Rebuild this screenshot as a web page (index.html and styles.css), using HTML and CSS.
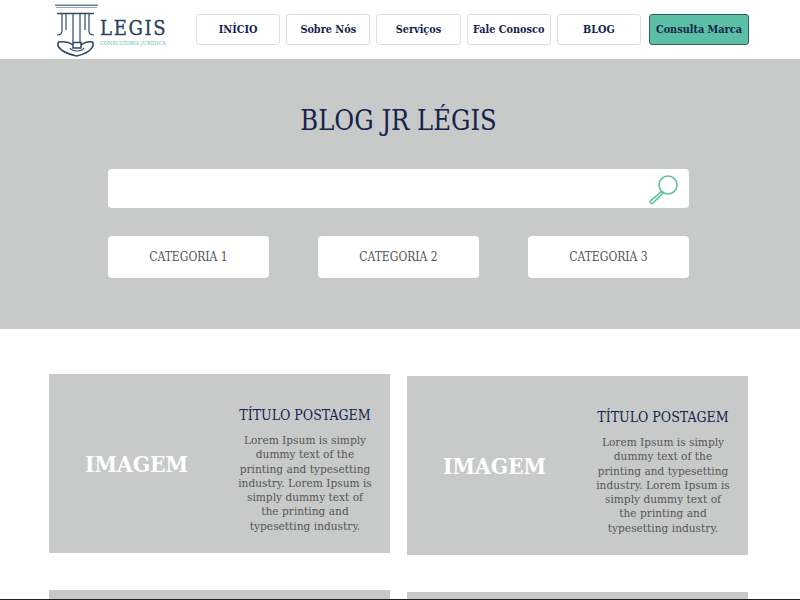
FILE: index.html
```html
<!DOCTYPE html>
<html lang="pt-BR">
<head>
    <meta charset="UTF-8">
    <meta name="viewport" content="width=device-width, initial-scale=1.0">
    <title>Blog JR Légis</title>
    <link rel="stylesheet" href="styles.css">
</head>
<body>
<div class="page">
    <header class="topo">
        <a class="logo" href="#">
            <svg class="logo-icone" width="46" height="58" viewBox="0 0 46 58" fill="none" stroke="#2f4a68" stroke-width="1.2">
                <path d="M1 5.2H44" stroke="#6d8090" stroke-width="1.4"/>
                <path d="M2 7.4H43" stroke="#6d8090" stroke-width=".8"/>
                <path d="M3 13.5H40" stroke-width="1.4"/>
                <path d="M8 14V31Q8 35 3 35"/>
                <path d="M12 14V30"/>
                <path d="M19 14V42M26 14V42"/>
                <path d="M31 14V30"/>
                <path d="M35 14V31Q35 35 40 35"/>
                <path d="M19 42.5H27V48H19Z" stroke-width="1.5"/>
                <path d="M4 42Q14 41 19 45M39 42Q32 41 27 45" stroke-width="1.5"/>
                <path d="M4 42V46Q8 53 22.5 56Q36 53 39 46V42" stroke-width="1.6"/>
                <path d="M16 48Q18 51 23 51Q28 51 30 48"/>
            </svg>
            <span class="logo-texto">
                <span class="logo-nome">LEGIS</span>
                <span class="logo-sub">CONSULTORIA JURÍDICA</span>
            </span>
        </a>
        <nav class="menu">
            <a class="menu-item" href="#">INÍCIO</a>
            <a class="menu-item" href="#">Sobre Nós</a>
            <a class="menu-item" href="#">Serviços</a>
            <a class="menu-item" href="#">Fale Conosco</a>
            <a class="menu-item" href="#">BLOG</a>
            <a class="menu-item destaque" href="#">Consulta Marca</a>
        </nav>
    </header>

    <section class="hero">
        <h1>BLOG JR LÉGIS</h1>
        <div class="busca">
            <svg width="32" height="32" viewBox="0 0 32 32" fill="none" stroke="#5cc0a7" stroke-width="1.6">
                <circle cx="20" cy="12" r="9"/>
                <path d="M13.5 18.5L15 20L4.8 30.2Q3.8 31 2.6 30Q1.7 28.9 2.6 27.8Z"/>
            </svg>
        </div>
        <div class="categorias">
            <a class="categoria" href="#">CATEGORIA 1</a>
            <a class="categoria" href="#">CATEGORIA 2</a>
            <a class="categoria" href="#">CATEGORIA 3</a>
        </div>
    </section>

    <main class="posts">
        <article class="post">
            <div class="post-imagem">IMAGEM</div>
            <div class="post-texto">
                <h2>TÍTULO POSTAGEM</h2>
                <p>Lorem Ipsum is simply dummy text of the printing and typesetting industry. Lorem Ipsum is simply dummy text of<br>the printing and<br>typesetting industry.</p>
            </div>
        </article>
        <article class="post desce">
            <div class="post-imagem">IMAGEM</div>
            <div class="post-texto">
                <h2>TÍTULO POSTAGEM</h2>
                <p>Lorem Ipsum is simply dummy text of the printing and typesetting industry. Lorem Ipsum is simply dummy text of<br>the printing and<br>typesetting industry.</p>
            </div>
        </article>
        <article class="post"></article>
        <article class="post desce"></article>
    </main>
</div>
</body>
</html>
```

FILE: styles.css
```css
* { box-sizing: border-box; }
body { margin: 0; font-family: "DejaVu Serif", "Liberation Serif", serif; font-stretch: condensed; color: #14244c; background: #fff; }
a { text-decoration: none; color: inherit; }
h1, h2, p { margin: 0; font-weight: normal; }

.page { height: 600px; overflow: hidden; border-bottom: 1px solid #2b1a24; }

.topo { height: 59px; display: flex; align-items: flex-start; padding: 0 51px 0 54px; }
.logo { display: flex; width: 142px; align-items: flex-start; }
.logo-icone { flex: none; }
.logo-texto { display: flex; flex-direction: column; margin-top: 16px; }
.logo-nome { font-size: 20px; line-height: 24px; letter-spacing: 1.7px; color: #2a4160; -webkit-text-stroke: .3px #2a4160; }
.logo-sub { font-size: 5.5px; line-height: 6px; color: #5cc0a7; white-space: nowrap; }

.menu { display: flex; gap: 6px; margin-top: 14px; }
.menu-item { width: 84.2px; height: 31px; display: flex; align-items: center; justify-content: center; border: 1px solid #dcdde0; border-radius: 3px; font-size: 10.8px; font-weight: bold; white-space: nowrap; }
.menu-item.destaque { width: 100px; margin-left: 2px; background: #5bbfa5; border-color: #35606a; }

.hero { height: 270px; background: #c8caca; padding: 44px 111px 0 108px; }
.hero h1 { text-align: center; font-size: 27px; line-height: 36px; color: #14244c; }
.busca { height: 39px; margin-top: 30px; background: #fff; border-radius: 4px; display: flex; align-items: center; justify-content: flex-end; padding-right: 9px; }
.categorias { display: flex; justify-content: space-between; margin-top: 28px; }
.categoria { width: 161px; height: 42px; display: flex; align-items: center; justify-content: center; background: #fff; border-radius: 4px; font-size: 12px; color: #555; }

.posts { display: grid; grid-template-columns: 341px 341px; grid-auto-rows: 179px; column-gap: 17px; row-gap: 37px; padding: 45px 0 0 49px; }
.post { height: 179px; background: #c8caca; display: flex; }
.post.desce { margin-top: 2px; }
.post-imagem { width: 175px; display: flex; align-items: center; justify-content: center; color: #fff; font-size: 22.6px; font-weight: bold; }
.post-texto { width: 140px; margin-left: 11px; padding-top: 31px; text-align: center; }
.post-texto h2 { font-size: 14px; line-height: 20px; white-space: nowrap; }
.post-texto p { margin-top: 8px; font-size: 11.8px; line-height: 14.3px; color: #555; }
```
